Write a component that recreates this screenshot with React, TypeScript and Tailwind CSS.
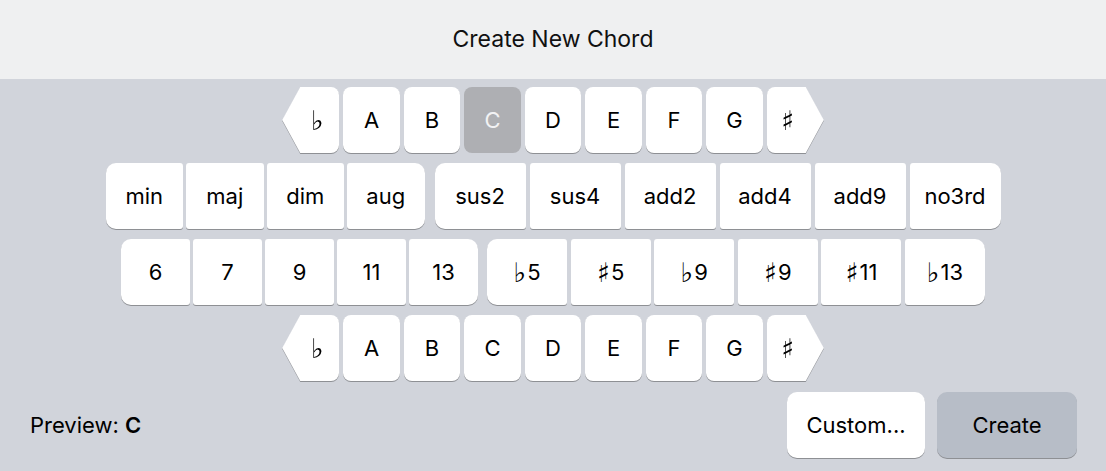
import React from "react";

const font = { fontFamily: "Inter, 'DejaVu Sans', sans-serif" };

const NOTES = ["A", "B", "C", "D", "E", "F", "G"];

function Accidental({ ch }: { ch: string }) {
  return <span className="text-[27px] leading-none font-bold font-['DejaVu_Sans'] mr-[1px]">{ch}</span>;
}

function renderLabel(label: string) {
  if (label.startsWith("♭") || label.startsWith("♯")) {
    return (
      <>
        <Accidental ch={label[0]} />
        {label.slice(1)}
      </>
    );
  }
  return label;
}

function NoteRow({ selected }: { selected?: string }) {
  return (
    <div className="flex justify-center gap-[4px]">
      <div className="drop-shadow-[0_1px_0_rgba(0,0,0,0.32)]">
        <div className="w-[57px] h-[66px] bg-white rounded-r-[8px] [clip-path:polygon(18px_0,100%_0,100%_100%,18px_100%,0_50%)] flex items-center justify-center pl-[14px] text-[22px] text-black">
          <Accidental ch="♭" />
        </div>
      </div>
      {NOTES.map((n) => (
        <div
          key={n}
          className={
            n === selected
              ? "w-[56.5px] h-[66px] rounded-[8px] bg-[#aeafb3] text-[#f2f2f4] flex items-center justify-center text-[22px]"
              : "w-[56.5px] h-[66px] rounded-[8px] bg-white text-black flex items-center justify-center text-[22px] shadow-[0_1px_0_rgba(0,0,0,0.32)]"
          }
        >
          {n}
        </div>
      ))}
      <div className="drop-shadow-[0_1px_0_rgba(0,0,0,0.32)]">
        <div className="w-[57px] h-[66px] bg-white rounded-l-[8px] [clip-path:polygon(0_0,calc(100%-18px)_0,100%_50%,calc(100%-18px)_100%,0_100%)] flex items-center justify-center pr-[14px] text-[22px] text-black">
          <Accidental ch="♯" />
        </div>
      </div>
    </div>
  );
}

function KeyGroup({ labels, width, gap }: { labels: string[]; width: string; gap: string }) {
  return (
    <div className={`flex ${gap}`}>
      {labels.map((l, i) => {
        const first = i === 0;
        const last = i === labels.length - 1;
        const radius = first
          ? "rounded-l-[10px] rounded-r-[3px]"
          : last
          ? "rounded-r-[10px] rounded-l-[3px]"
          : "rounded-[3px]";
        return (
          <div
            key={l}
            className={`${width} ${radius} h-[66px] bg-white text-black flex items-center justify-center text-[22px] shadow-[0_1px_0_rgba(0,0,0,0.32)]`}
          >
            {renderLabel(l)}
          </div>
        );
      })}
    </div>
  );
}

export default function App() {
  return (
    <div style={font} className="w-[1106px] h-[471px] bg-[#d1d4db] flex flex-col overflow-hidden">
      <div className="h-[79px] bg-[#eff0f1] flex items-center justify-center">
        <span className="text-[23px] text-[#111]">Create New Chord</span>
      </div>

      <div className="flex flex-col gap-[10px] pt-[8px]">
        <NoteRow selected="C" />
        <div className="flex justify-center gap-[10px]">
          <KeyGroup labels={["min", "maj", "dim", "aug"]} width="w-[77.5px]" gap="gap-[3px]" />
          <KeyGroup
            labels={["sus2", "sus4", "add2", "add4", "add9", "no3rd"]}
            width="w-[91px]"
            gap="gap-[4px]"
          />
        </div>
        <div className="flex justify-center gap-[9px]">
          <KeyGroup labels={["6", "7", "9", "11", "13"]} width="w-[69px]" gap="gap-[3px]" />
          <KeyGroup
            labels={["♭5", "♯5", "♭9", "♯9", "♯11", "♭13"]}
            width="w-[80px]"
            gap="gap-[3.6px]"
          />
        </div>
        <NoteRow />
      </div>

      <div className="flex items-center justify-between mt-[11px] pl-[30px] pr-[29px]">
        <div className="text-[22px] text-black">
          Preview: <span className="font-semibold">C</span>
        </div>
        <div className="flex gap-[12px]">
          <button className="w-[138px] h-[66px] rounded-[10px] bg-white text-black text-[22px] shadow-[0_1px_0_rgba(0,0,0,0.32)]">
            Custom...
          </button>
          <button className="w-[140px] h-[66px] rounded-[10px] bg-[#b7bdc7] text-black text-[22px] shadow-[0_1px_0_rgba(0,0,0,0.32)]">
            Create
          </button>
        </div>
      </div>
    </div>
  );
}
